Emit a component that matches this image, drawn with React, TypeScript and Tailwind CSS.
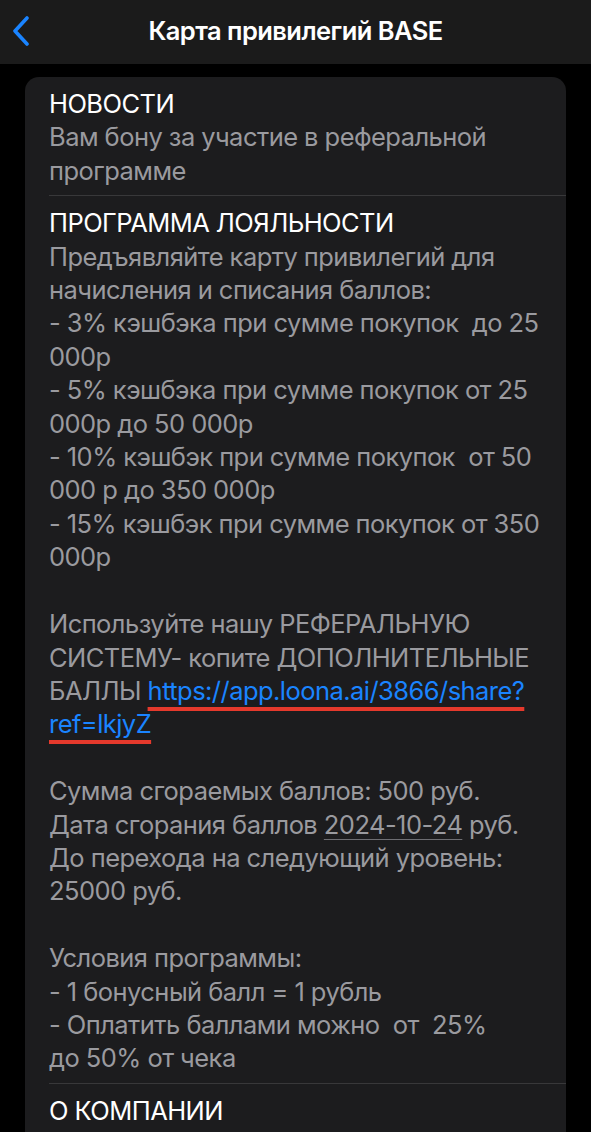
import React from 'react';

const ChevronLeft = () => (
  <svg width="18" height="30" viewBox="0 0 18 30" fill="none">
    <path d="M15 2L3 15l12 13" stroke="#1a84ff" strokeWidth="3.6" strokeLinecap="round" strokeLinejoin="round" />
  </svg>
);

const Section: React.FC<{ title: string; children?: React.ReactNode; last?: boolean }> = ({ title, children, last }) => (
  <div className={`pt-[10px] pb-[8px] ${last ? '' : 'border-b border-[#38383a]'}`}>
    <div className="text-white">{title}</div>
    {children && <div className="text-[#9a9a9f] whitespace-pre-wrap">{children}</div>}
  </div>
);

export default function App() {
  return (
    <div
      className="min-h-screen bg-black text-[25.5px] leading-[33.4px] tracking-[-0.55px]"
      style={{ fontFamily: 'Inter, "Noto Sans", sans-serif' }}
    >
      {/* Nav bar */}
      <header className="relative h-[64px] bg-[#1b1b1b] flex items-center justify-center">
        <button className="absolute left-[12px] top-[16px]">
          <ChevronLeft />
        </button>
        <h1 className="text-white font-semibold text-[25.5px] -mt-[2px]">Карта привилегий BASE</h1>
      </header>

      <main className="pt-[13px] px-[25px] h-[1068px] overflow-hidden">
        <div className="bg-[#1c1c1e] rounded-[14px] pl-[24px] pb-[40px]">
          <Section title="НОВОСТИ">
            <div className="pr-[16px]">Вам бону за участие в реферальной программе</div>
          </Section>

          <Section title="ПРОГРАММА ЛОЯЛЬНОСТИ">
            <div className="pr-[16px]">
              {'Предъявляйте карту привилегий для начисления и списания баллов:\n- 3% кэшбэка при сумме покупок  до 25 000р\n- 5% кэшбэка при сумме покупок от 25 000р до 50 000р\n- 10% кэшбэк при сумме покупок  от 50 000 р до 350 000р\n- 15% кэшбэк при сумме покупок от 350 000р\n\nИспользуйте нашу РЕФЕРАЛЬНУЮ СИСТЕМУ- копите ДОПОЛНИТЕЛЬНЫЕ БАЛЛЫ '}
              <a
                href="#"
                className="text-[#1a84ff] underline decoration-[#e5392c] decoration-[4px] underline-offset-[7px]"
              >
                https://app.loona.ai/3866/share?<wbr />ref=lkjyZ
              </a>
              {'\n\nСумма сгораемых баллов: 500 руб.\nДата сгорания баллов '}
              <span className="underline decoration-[#6e6e73] decoration-1 underline-offset-[5px]">2024-10-24</span>
              {' руб.\nДо перехода на следующий уровень: 25000 руб.\n\nУсловия программы:\n- 1 бонусный балл = 1 рубль\n- Оплатить баллами можно  от  25%\nдо 50% от чека'}
            </div>
          </Section>

          <Section title="О КОМПАНИИ" last />
        </div>
      </main>
    </div>
  );
}
